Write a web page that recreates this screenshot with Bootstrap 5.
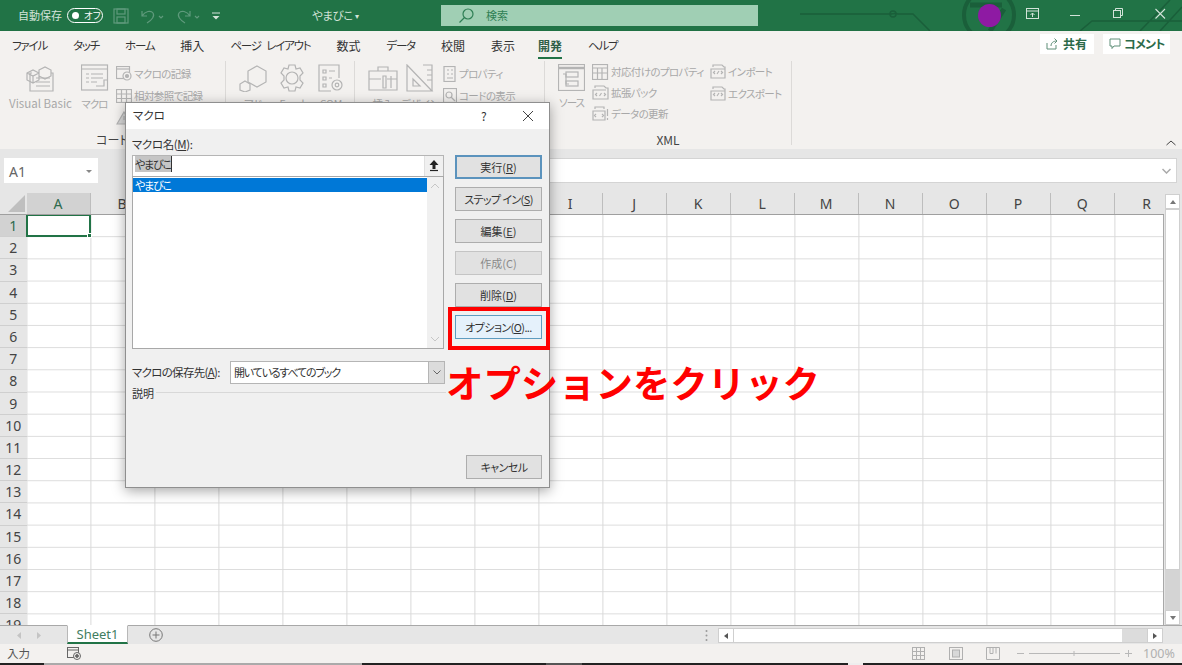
<!doctype html>
<html lang="ja"><head><meta charset="utf-8"><title>Excel</title>
<link rel="stylesheet" href="https://cdn.jsdelivr.net/npm/bootstrap@5.3.0/dist/css/bootstrap.min.css">
<style>
html,body{margin:0;height:665px;overflow:hidden}
body{font-family:"Noto Sans CJK JP","Noto Sans",sans-serif;font-feature-settings:"palt";background:#e6e6e6;color:#333;font-size:12px}
.xl{position:relative;width:1182px;height:665px;overflow:hidden}
svg{display:block;flex:none}
.ic{fill:none;stroke:#b4b4b4;stroke-width:1.2}
/* title bar */
.tbar{height:31px;background:#217346;color:#d3e3d9;padding-left:18px;font-size:11px;position:relative}
.tdeco{position:absolute;left:800px;top:0}
.tog{width:36px;height:15px;border:1px solid #fff;border-radius:8px;margin-left:5px;font-size:9.5px;color:#fff;gap:5px;padding-left:4px}
.tog i{width:7px;height:7px;background:#fff;border-radius:50%;display:block}
.qat{stroke:#5f9a7c;fill:none;stroke-width:1.2}
.bookn{position:absolute;left:312px;top:7px;font-size:11.5px;letter-spacing:-.4px;color:#d3e3d9}
.srch{position:absolute;left:441px;top:5px;width:317px;height:21px;background:#a0cfb4;color:#2f7f55;font-size:11px;padding-left:17px;gap:12px}
.wc{position:absolute;top:8px}
.avatar{position:absolute;left:978px;top:4px;width:23px;height:23px;border-radius:50%;background:#8e1aa3}
/* ribbon */
.rib{height:118px;background:#f3f1ef;position:relative;box-shadow:0 1px 2px rgba(0,0,0,.25)}
.tabs{height:30px;padding-left:12px;gap:26px;font-size:12px;color:#333;align-items:center}
.tabs span{position:relative;white-space:nowrap}
.tabs .kn{font-size:11.5px;letter-spacing:-1.2px}
.tabs .wide{word-spacing:4px}
.tabs .on{font-weight:700;color:#2f5f47;margin-left:-3px}
.tabs .on::after{content:"";position:absolute;left:0;right:0;bottom:-4px;height:2px;background:#217346}
.shr{position:absolute;top:3px;height:20px;background:#fff;color:#2b6a49;font-weight:700;font-size:12px;gap:5px;padding-left:6px;white-space:nowrap}
.shr1{left:1040px;width:54px}
.shr2{left:1103px;width:67px;gap:3px;letter-spacing:-.7px}
.grp{position:relative;height:84px;border-right:1px solid #dcdad8;color:#a8a8a8;font-size:10.5px;padding-top:3px}
.g1{width:226px;padding-left:8px}
.g2{width:129px;padding-left:13px;gap:11px}
.g3{width:190px;padding-left:14px;gap:9px}
.g4{width:247px;padding-left:13px}
.big{display:flex;flex-direction:column;align-items:center;gap:5px;white-space:nowrap;line-height:13px}
.big.fix{width:28px}
.vb{font-size:11.5px}
.tight{letter-spacing:-1px}
.smalls{display:flex;flex-direction:column;gap:5px;white-space:nowrap;letter-spacing:-.6px;margin-top:1px}
.smalls>div{display:flex;align-items:center;gap:2px;height:17px}
.smalls.xm{margin-top:-1px}
.glab{position:absolute;bottom:-4px;left:0;width:100%;text-align:center;color:#444;font-size:12px}
.collapse-up{position:absolute;right:6px;bottom:3px}
/* formula */
.fbar{height:44px;padding:9px 5px 0 4px;background:#e6e6e6;position:relative}
.nbox{width:94px;height:25px;background:#fff;color:#666;font-size:14px;padding:2px 6px 0 5px;font-family:"Noto Sans",sans-serif}
.fbox{position:absolute;left:170px;right:5px;top:9px;height:25px;background:#fff;border:1px solid #d4d4d4;padding-right:5px}
.tridown{width:0;height:0;border-left:3px solid transparent;border-right:3px solid transparent;border-top:3px solid #888}
/* sheet */
.sheet{height:432px;position:relative;background:#e6e6e6}
.chead{height:21px;padding-left:26.6px;font-family:"Noto Sans",sans-serif;font-size:14px;color:#444}
.chead span{width:64px;flex:none;text-align:center;border-right:1px solid #bdbdbd;height:21px;line-height:21px}
.chead .sel{background:#d2d2d2;color:#2e6b4d}
.chead .last{border-right:0}
.corner{position:absolute;left:8px;top:2px;width:0;height:0;border-left:17px solid transparent;border-bottom:17px solid #bfbfbf}
.gridw{height:411px;overflow:hidden;border-top:1px solid #9f9f9f;margin-top:0}
.rhead{width:26.6px;font-family:"Noto Sans",sans-serif;font-size:14px;color:#444;flex:none}
.rhead span{display:block;height:22.2px;line-height:22px;text-align:center;border-bottom:1px solid #cfcfcf}
.rhead .sel{background:#d2d2d2;color:#2e6b4d}
.cells{width:1137px;background-color:#fff;background-image:linear-gradient(to right,#d9d9d9 1px,transparent 1px),linear-gradient(to bottom,#dcdcdc 1px,transparent 1px);background-size:64px 100%,100% 22.2px;background-position:63.4px 0,0 21.2px;position:relative;border-right:1px solid #a8a8a8}
.acell{position:absolute;left:-1px;top:-1px;width:65px;height:23.4px;border:2px solid #217346}
.acell::after{content:"";position:absolute;right:-3px;bottom:-3px;width:5px;height:5px;background:#217346;border:1px solid #fff}
.vs{position:absolute;left:1164px;top:0;width:18px;height:432px;background:#e6e6e6}
.vbtn{position:absolute;left:1px;width:15px;height:15px;background:#fff;border:1px solid #cfcfcf}
.vth{position:absolute;left:1px;top:16px;width:15px;height:361px;background:#fff;border:1px solid #cfcfcf}
.tgrey{position:absolute;left:1px;top:377px;width:15px;height:40px;background:#d4d4d4}
.tri{width:0;height:0;margin:auto;border-left:3.5px solid transparent;border-right:3.5px solid transparent}
/* tabs & status */
.sbar{height:19px;background:#e6e6e6;border-top:1px solid #a8a8a8;position:relative;font-family:"Noto Sans",sans-serif}
.stab{position:absolute;left:67px;top:-1px;width:61px;height:19px;background:#fff;border:1px solid #b8b8b8;border-top-color:#fff;border-bottom:2px solid #217346;color:#3f7d5f;font-size:13px;text-align:center;line-height:17px}
.hs{position:absolute;left:718px;top:2px;width:445px;height:15px;background:#fff;border:1px solid #cfcfcf}
.hsbtn{width:15px;height:13px;background:#fff;border-right:1px solid #cfcfcf}
.hstrk{width:25px;margin-left:auto;background:#dcdcdc}
.sts{height:19px;background:#f3f1ef;position:relative;color:#555;font-size:11.5px;padding-left:7px}
.blk{height:2px;background:#ddd}
.blk i{display:block;height:2px}
.s1{width:44px;background:#222}.s2{width:318px;background:#aaa}.s3{width:184px;background:#222}.s4{width:36px;background:#555}.s5{width:266px;background:#222}.s6{width:15px;background:#eee}.s7{width:319px;background:#222}
.zm{position:absolute;left:1143px;top:1px;color:#b0b0b0;font-size:12.5px;font-family:"Noto Sans",sans-serif}
/* dialog */
.dlg{position:absolute;left:125px;top:102px;width:425px;height:386px;background:#f0f0f0;border:1px solid #8f8f8f;box-shadow:0 3px 12px rgba(0,0,0,.35);font-size:11px;color:#333}
.dtit{height:26px;background:#fff;padding-left:7px;font-size:11.5px;position:relative}
.dbody{padding:6px 6px 0 6px}
.lab{height:17px;line-height:17px;font-size:11.5px;margin:1px 0 2px;letter-spacing:-.4px}
.dinput{width:312px;height:21px;background:#fff;border:1px solid #b5b5b5;border-bottom:0;padding-left:2px;position:relative;font-size:11px}
.dinput mark{background:#c5c5c5;color:#333;padding:0;border-right:1px solid #333;letter-spacing:-1.2px}
.upb{position:absolute;right:0;top:0;width:19px;height:20px;background:#f0f0f0;border-left:1px solid #e0e0e0;padding:4px 0 0 4px}
.lst{width:312px;height:173px;border:1px solid #a8a8a8;border-radius:0;background:#fff;position:relative;padding:1px 16px 0 0;display:block}
.lst .list-group-item{background:#0078d7;color:#fff;border:0;border-radius:0;padding:0 2px;height:14px;line-height:14px;font-size:11px;letter-spacing:-1.2px}
.lsb{position:absolute;right:0;top:0;bottom:0;width:16px;background:#f0f0f0}
.btnc{width:87px;margin-left:11px;gap:8px}
.wb{font-feature-settings:"palt";--bs-btn-padding-x:0;--bs-btn-padding-y:0;--bs-btn-font-size:11px;--bs-btn-border-radius:0;--bs-btn-color:#333;--bs-btn-bg:#e1e1e1;--bs-btn-border-color:#adadad;--bs-btn-hover-bg:#e1e1e1;--bs-btn-hover-color:#333;--bs-btn-hover-border-color:#adadad;--bs-btn-disabled-color:#8a8a8a;--bs-btn-disabled-bg:#e1e1e1;--bs-btn-disabled-border-color:#c4c4c4;--bs-btn-disabled-opacity:1;height:24px;width:87px;line-height:20px;white-space:nowrap}
.wb.def{border:2px solid #5b93bd;line-height:18px}
.wb.foc{background:#e5f1fb;border:1px solid #5e9cc0;box-shadow:inset 0 0 0 1px #e5f1fb}
.wb.can{width:76px;position:absolute;right:7px;bottom:8px}
.wb.kb{letter-spacing:-.6px}
.srow{margin-top:12px;height:23px}
.srow .slab{width:89px;white-space:nowrap;font-size:11.5px;letter-spacing:-.7px}
.sel2{width:215px;height:23px;margin-left:9px;background:#fff;border:1px solid #b5b5b5;padding-left:3px;position:relative;line-height:20px;letter-spacing:-1.2px}
.sarr{position:absolute;right:0;top:0;width:16px;height:21px;background:#dcdcdc;border-left:1px solid #b5b5b5}
.descr{margin-top:1px;height:17px;line-height:17px;gap:2px;font-size:11px}
.descr hr{margin:-2px 0 0;border:0;border-top:1px solid #d8d8d8;opacity:1;width:290px;flex:none}
/* annotation */
.redbox{position:absolute;left:448px;top:307px;width:102px;height:43px;border:4px solid #f00}
.anno{position:absolute;left:446px;top:358px;color:#f00;font-weight:700;font-size:37.4px;line-height:48px;white-space:nowrap;font-feature-settings:normal}
</style></head><body>
<div class="xl">
 <div class="tbar d-flex align-items-center">
  <span>自動保存</span>
  <div class="tog d-flex align-items-center"><i></i><span>オフ</span></div>
  <svg class="qat" width="16" height="16" viewBox="0 0 16 16" style="margin-left:10px"><rect x="1" y="1" width="14" height="14"/><rect x="4" y="1" width="8" height="5"/><rect x="4" y="9" width="8" height="6"/></svg>
  <svg class="qat" width="26" height="16" viewBox="0 0 26 16" style="margin-left:11px"><path d="M2 3v5h5M2 8c3-5 9-6 11-3 2 3-1 7-6 10"/><path d="M19 8l2 2 2-2"/></svg>
  <svg class="qat" width="26" height="16" viewBox="0 0 26 16" style="margin-left:10px"><path d="M14 3v5H9M14 8c-3-5-9-6-11-3-2 3 1 7 6 10"/><path d="M19 8l2 2 2-2"/></svg>
  <svg width="10" height="10" viewBox="0 0 10 10" style="margin-left:9px"><path d="M1 2h8" stroke="#d3e3d9"/><path d="M1.500 5h7L5 8.500z" fill="#d3e3d9"/></svg>
  <span class="bookn">やまびこ <span style="font-size:8px;vertical-align:1px">▾</span></span>
  <div class="srch d-flex align-items-center">
   <svg width="16" height="16" viewBox="0 0 16 16" fill="none" stroke="#2f7f55" stroke-width="1.2"><circle cx="10" cy="6" r="5"/><path d="M6.500 9.500L1.500 14.500"/></svg>
   <span>検索</span>
  </div>
  <svg class="tdeco" width="382" height="31" viewBox="0 0 382 31" fill="none" stroke="#1a5f3a" stroke-width="1.500"><path d="M0 14H90c3 0 5-1 8 0h15l17 17"/><circle cx="93" cy="14" r="3"/><circle cx="189" cy="15" r="25" stroke-width="4"/><path d="M170 5h32M190 31l14-22" stroke-width="5"/><path d="M280 31l12-10h90M340 31l30-31M360 31l22-24"/></svg>
  <div class="avatar"></div>
  <svg class="wc" style="left:1026px" width="13" height="12" viewBox="0 0 13 12" fill="none" stroke="#d3e3d9"><rect x=".5" y=".5" width="12" height="10"/><path d="M.5 3h12M6.500 9V5M4.500 7l2-2 2 2"/></svg>
  <svg class="wc" style="left:1070px" width="11" height="12" viewBox="0 0 11 12" stroke="#d3e3d9"><path d="M0 7.500h10"/></svg>
  <svg class="wc" style="left:1113px" width="11" height="12" viewBox="0 0 11 12" fill="none" stroke="#d3e3d9"><rect x=".5" y="2.500" width="7" height="7"/><path d="M2.500 2.500v-2h7v7h-2"/></svg>
  <svg class="wc" style="left:1155px" width="11" height="12" viewBox="0 0 11 12" fill="none" stroke="#d3e3d9" stroke-width="1.100"><path d="M.5 1l9.500 9.500M10 1L.5 10.500"/></svg>
 </div>

 <div class="rib">
  <div class="tabs d-flex">
   <span class="kn">ファイル</span><span class="kn">タッチ</span><span class="kn">ホーム</span><span>挿入</span><span class="kn wide">ページ レイアウト</span><span>数式</span><span class="kn">データ</span><span>校閲</span><span>表示</span><span class="on">開発</span><span class="kn">ヘルプ</span>
  </div>
  <div class="shr shr1 d-flex align-items-center"><svg width="12" height="12" viewBox="0 0 12 12" fill="none" stroke="#5f8f78"><path d="M1 5v6h9V7M5 8c0-3 2-5 6-5M8.500 .5L11 3 8.500 5.500"/></svg><span>共有</span></div>
  <div class="shr shr2 d-flex align-items-center"><svg width="12" height="12" viewBox="0 0 12 12" fill="none" stroke="#5f8f78"><path d="M1 1h10v7H5L3 10.500V8H1z"/></svg><span>コメント</span></div>
  <div class="d-flex">
   <div class="grp g1 d-flex">
    <div class="big vb" style="width:65px"><svg class="ic" width="29" height="28" viewBox="0 0 29 28"><path d="M6 9h-2v18h23V9h-2M10 14h14M10 18h14M10 22h14"/><path d="M1 9l6-3 6 3v7l-6 3-6-3zM1 9l6 3 6-3M7 12v7M13 6l6-3 6 3v6l-6 3-6-3z"/></svg><span>Visual Basic</span></div>
    <div class="big tight" style="width:37px;margin-left:3px"><svg class="ic" width="28" height="28" viewBox="0 0 28 28"><rect x=".5" y="1" width="26" height="25"/><path d="M1 5h26M5 10h3M5 14h3M5 18h3M10 10h12M10 14h12M10 18h6"/><path d="M15 22h8v-6h4" /></svg><span>マクロ</span></div>
    <div class="smalls" style="margin-left:3px">
     <div><svg class="ic" width="16" height="15" viewBox="0 0 16 15"><rect x=".5" y=".5" width="13" height="12"/><path d="M1 3h12"/><circle cx="11" cy="10" r="4" fill="#f3f1ef"/><circle cx="11" cy="10" r="1.500" fill="#b4b4b4"/></svg><span>マクロの記録</span></div>
     <div><svg class="ic" width="16" height="14" viewBox="0 0 16 14"><rect x=".5" y=".5" width="15" height="13"/><path d="M.5 5h15M.5 9.500h15M5.500 .5v13M10.500 .5v13"/></svg><span>相対参照で記録</span></div>
     <div><svg class="ic" width="16" height="14" viewBox="0 0 16 14"><path d="M8 1l7 12H1z" fill="#d8d8d8"/><path d="M8 5v4"/></svg></div>
    </div>
    <div class="glab">コード</div>
   </div>
   <div class="grp g2 d-flex">
    <div class="big fix"><svg class="ic" width="28" height="28" viewBox="0 0 28 28"><path d="M18 2l9 5v11l-9 5-9-5V7z"/><path d="M6 17l5 3v6l-5 2-5-2v-6z"/></svg><span>アド</span></div>
    <div class="big fix"><svg class="ic" width="28" height="28" viewBox="0 0 28 28"><circle cx="14" cy="14" r="6"/><path d="M11 1h6l1 4 4-1 3 5-3 3v4l3 3-3 5-4-1-1 4h-6l-1-4-4 1-3-5 3-3v-4L3 9l3-5 4 1z"/></svg><span>Excel</span></div>
    <div class="big fix"><svg class="ic" width="26" height="28" viewBox="0 0 26 28"><path d="M13 27H1V1h20v13"/><path d="M5 6h3v3H5zM5 13h3v3H5zM5 20h3v3H5zM11 7h6M11 14h3"/><circle cx="19" cy="21" r="5"/><circle cx="19" cy="21" r="1.800"/></svg><span>COM</span></div>
   </div>
   <div class="grp g3 d-flex">
    <div class="big" style="width:28px"><svg class="ic" width="30" height="28" viewBox="0 0 30 28"><path d="M1 7h28v19H1zM10 7V3h10v4M1 15h12M19 15h10"/><path d="M15 12h3v12h-3zM23 12v12" /></svg><span>挿入</span></div>
    <div class="big fix"><svg class="ic" width="28" height="28" viewBox="0 0 28 28"><path d="M1 1l25 26H1zM7 15v7h7z"/><path d="M17 1h9v26M21 6h5M21 11h5M21 16h5"/></svg><span>デザイン</span></div>
    <div class="smalls">
     <div><svg class="ic" width="14" height="16" viewBox="0 0 14 16"><rect x="1" y=".5" width="11" height="15"/><path d="M4 4h2M8 4h2M4 8h2M8 8h2M4 12h6"/></svg><span>プロパティ</span></div>
     <div><svg class="ic" width="14" height="16" viewBox="0 0 14 16"><rect x=".5" y=".5" width="13" height="14"/><circle cx="6" cy="7" r="3"/><path d="M8 9l4 4"/></svg><span>コードの表示</span></div>
    </div>
   </div>
   <div class="grp g4 d-flex">
    <div class="big tight" style="margin-right:7px;width:27px"><svg class="ic" width="27" height="27" viewBox="0 0 27 27"><rect x=".5" y=".5" width="26" height="26"/><path d="M1 4h25" stroke-width="2.500"/><rect x="8" y="8" width="12" height="5"/><rect x="8" y="17" width="12" height="5"/><path d="M5 10h3v10h3"/></svg><span>ソース</span></div>
    <div class="smalls xm" style="gap:4px;width:118px">
     <div><svg class="ic" width="17" height="16" viewBox="0 0 17 16"><rect x=".5" y=".5" width="15" height="15"/><path d="M1 4h14M1 9h14M5.500 4v11M10 4v11"/></svg><span>対応付けのプロパティ</span></div>
     <div><svg class="ic" width="17" height="15" viewBox="0 0 17 15"><path d="M3 3V1h9l2 2h2v11H1V5h13"/><path d="M5 8L3.500 9.500 5 11M12 8l1.500 1.500L12 11M9.500 8l-2 3"/></svg><span>拡張パック</span></div>
     <div><svg class="ic" width="17" height="15" viewBox="0 0 17 15"><path d="M3 3V1h9v2M1 5h12v9H1z"/><path d="M4 8L2.500 9.500 4 11M10 8l1.500 1.500L10 11M15.500 3v7M15.500 12v2"/></svg><span>データの更新</span></div>
    </div>
    <div class="smalls xm" style="gap:5px">
     <div><svg class="ic" width="16" height="15" viewBox="0 0 16 15"><path d="M3 3V1h9l2 2h1v11H1V5h14"/><path d="M5 7L3.500 8.500 5 10M11 7l1.500 1.500L11 10M9 7l-2 3"/></svg><span>インポート</span></div>
     <div><svg class="ic" width="16" height="15" viewBox="0 0 16 15"><path d="M3 3V1h9l2 2h1v11H1V5h14"/><path d="M5 7L3.500 8.500 5 10M11 7l1.500 1.500L11 10M9 7l-2 3"/></svg><span>エクスポート</span></div>
    </div>
    <div class="glab">XML</div>
   </div>
  </div>
  <svg class="collapse-up" width="10" height="6" viewBox="0 0 10 6" fill="none" stroke="#444"><path d="M.5 5L5 1l4.500 4"/></svg>
 </div>

 <div class="fbar">
  <div class="nbox d-flex align-items-center justify-content-between"><span>A1</span><div class="tridown"></div></div>
  <div class="fbox d-flex align-items-center justify-content-end"><svg width="9" height="6" viewBox="0 0 9 6" fill="none" stroke="#aaa" stroke-width="1.500"><path d="M.5 1L4.500 5l4-4"/></svg></div>
 </div>

 <div class="sheet">
  <div class="corner"></div>
  <div class="chead d-flex"><span class="sel">A</span><span>B</span><span>C</span><span>D</span><span>E</span><span>F</span><span>G</span><span>H</span><span>I</span><span>J</span><span>K</span><span>L</span><span>M</span><span>N</span><span>O</span><span>P</span><span>Q</span><span class="last">R</span></div>
  <div class="gridw d-flex">
   <div class="rhead"><span class="sel">1</span><span>2</span><span>3</span><span>4</span><span>5</span><span>6</span><span>7</span><span>8</span><span>9</span><span>10</span><span>11</span><span>12</span><span>13</span><span>14</span><span>15</span><span>16</span><span>17</span><span>18</span><span>19</span></div>
   <div class="cells"><div class="acell"></div></div>
  </div>
  <div class="vs">
   <div class="vbtn d-flex" style="top:1px"><div class="tri" style="border-bottom:4px solid #777"></div></div>
   <div class="vth"></div>
   <div class="tgrey"></div>
   <div class="vbtn d-flex" style="bottom:0"><div class="tri" style="border-top:4px solid #777"></div></div>
  </div>
 </div>

 <div class="sbar">
  <svg style="position:absolute;left:16px;top:5px" width="28" height="9" viewBox="0 0 28 9" fill="#c4c4c4"><path d="M5 1v7L1 4.500zM21 1v7l4-3.500z"/></svg>
  <div class="stab">Sheet1</div>
  <svg style="position:absolute;left:149px;top:2px" width="14" height="14" viewBox="0 0 14 14" fill="none" stroke="#777"><circle cx="7" cy="7" r="6.300"/><path d="M7 3.500v7M3.500 7h7"/></svg>
  <svg style="position:absolute;left:705px;top:4px" width="3" height="11" viewBox="0 0 3 11" fill="#999"><circle cx="1.500" cy="1" r="1"/><circle cx="1.500" cy="5.500" r="1"/><circle cx="1.500" cy="10" r="1"/></svg>
  <div class="hs d-flex">
   <div class="hsbtn d-flex"><div class="m-auto" style="border-top:3.500px solid transparent;border-bottom:3.500px solid transparent;border-right:4px solid #555"></div></div>
   <div class="hstrk"></div>
   <div class="hsbtn d-flex" style="border-right:0;border-left:1px solid #cfcfcf"><div class="m-auto" style="border-top:3.500px solid transparent;border-bottom:3.500px solid transparent;border-left:4px solid #555"></div></div>
  </div>
 </div>

 <div class="sts d-flex align-items-center">
  <span>入力</span>
  <svg style="margin-left:37px" width="14" height="13" viewBox="0 0 14 13" fill="none" stroke="#666"><rect x=".5" y=".5" width="11" height="10"/><path d="M.5 3h11"/><circle cx="10" cy="9" r="3.500" fill="#f3f1ef"/><circle cx="10" cy="9" r="1.400" fill="#666"/></svg>
  <svg style="position:absolute;left:912px;top:3px" width="13" height="13" viewBox="0 0 13 13" fill="none" stroke="#b0b0b0"><rect x=".5" y=".5" width="12" height="12"/><path d="M4.500 .5v12M8.500 .5v12M.5 4.500h12M.5 8.500h12"/></svg>
  <svg style="position:absolute;left:949px;top:3px" width="14" height="13" viewBox="0 0 14 13" fill="none" stroke="#b0b0b0"><rect x=".5" y=".5" width="13" height="12"/><rect x="3.500" y="3" width="7" height="7" fill="#d8d8d8"/></svg>
  <svg style="position:absolute;left:986px;top:3px" width="14" height="13" viewBox="0 0 14 13" fill="none" stroke="#b0b0b0"><path d="M.5 .5h13v12H.5zM4 .5v6h3v-6M10 .5v6"/></svg>
  <svg style="position:absolute;left:1016px;top:4px" width="118" height="11" viewBox="0 0 118 11" fill="none" stroke="#b8b8b8"><path d="M1 5.500h7M13 5.500h91M58 3v5M109 5.500h7M112.500 2v7"/></svg>
  <span class="zm">100%</span>
 </div>
 <div class="blk d-flex"><i class="s1"></i><i class="s2"></i><i class="s3"></i><i class="s4"></i><i class="s5"></i><i class="s6"></i><i class="s7"></i></div>

 <div class="dlg d-flex flex-column">
  <div class="dtit d-flex align-items-center"><span>マクロ</span>
   <span style="position:absolute;left:355px;top:4px;font-size:12px">?</span>
   <svg style="position:absolute;left:396px;top:7px" width="12" height="12" viewBox="0 0 12 12" fill="none" stroke="#444"><path d="M1 1l10 10M11 1L1 11"/></svg>
  </div>
  <div class="dbody">
   <div class="lab">マクロ名(<u>M</u>):</div>
   <div class="d-flex">
    <div>
     <div class="dinput"><mark>やまびこ</mark><div class="upb"><svg width="10" height="12" viewBox="0 0 10 12" fill="#222"><path d="M5 0L9.500 5H6.500V9H3.500V5H.5z"/><path d="M1 10.500h8" stroke="#222" stroke-width="1.200"/></svg></div></div>
     <div class="lst list-group"><div class="list-group-item">やまびこ</div>
      <div class="lsb">
       <svg style="position:absolute;left:3px;top:6px" width="10" height="6" viewBox="0 0 10 6" fill="none" stroke="#c6c6c6"><path d="M1 5l4-4 4 4"/></svg>
       <svg style="position:absolute;left:3px;bottom:6px" width="10" height="6" viewBox="0 0 10 6" fill="none" stroke="#c6c6c6"><path d="M1 1l4 4 4-4"/></svg>
      </div>
     </div>
    </div>
    <div class="btnc d-flex flex-column">
     <button class="btn wb def">実行(<u>R</u>)</button>
     <button class="btn wb kb">ステップ イン(<u>S</u>)</button>
     <button class="btn wb">編集(<u>E</u>)</button>
     <button class="btn wb" disabled>作成(C)</button>
     <button class="btn wb">削除(<u>D</u>)</button>
     <button class="btn wb foc kb">オプション(<u>O</u>)...</button>
    </div>
   </div>
   <div class="srow d-flex align-items-center"><span class="slab">マクロの保存先(<u>A</u>):</span>
    <div class="sel2">開いているすべてのブック<div class="sarr d-flex align-items-center justify-content-center"><svg width="8" height="5" viewBox="0 0 8 5" fill="none" stroke="#666"><path d="M.5 .5L4 4 7.500 .5"/></svg></div></div>
   </div>
   <div class="descr d-flex align-items-center"><span>説明</span><hr></div>
  </div>
  <button class="btn wb can kb">キャンセル</button>
 </div>

 <div class="redbox"></div>
 <div class="anno">オプションをクリック</div>
</div>
<script src="https://cdn.jsdelivr.net/npm/bootstrap@5.3.0/dist/js/bootstrap.bundle.min.js"></script>
</body></html>
